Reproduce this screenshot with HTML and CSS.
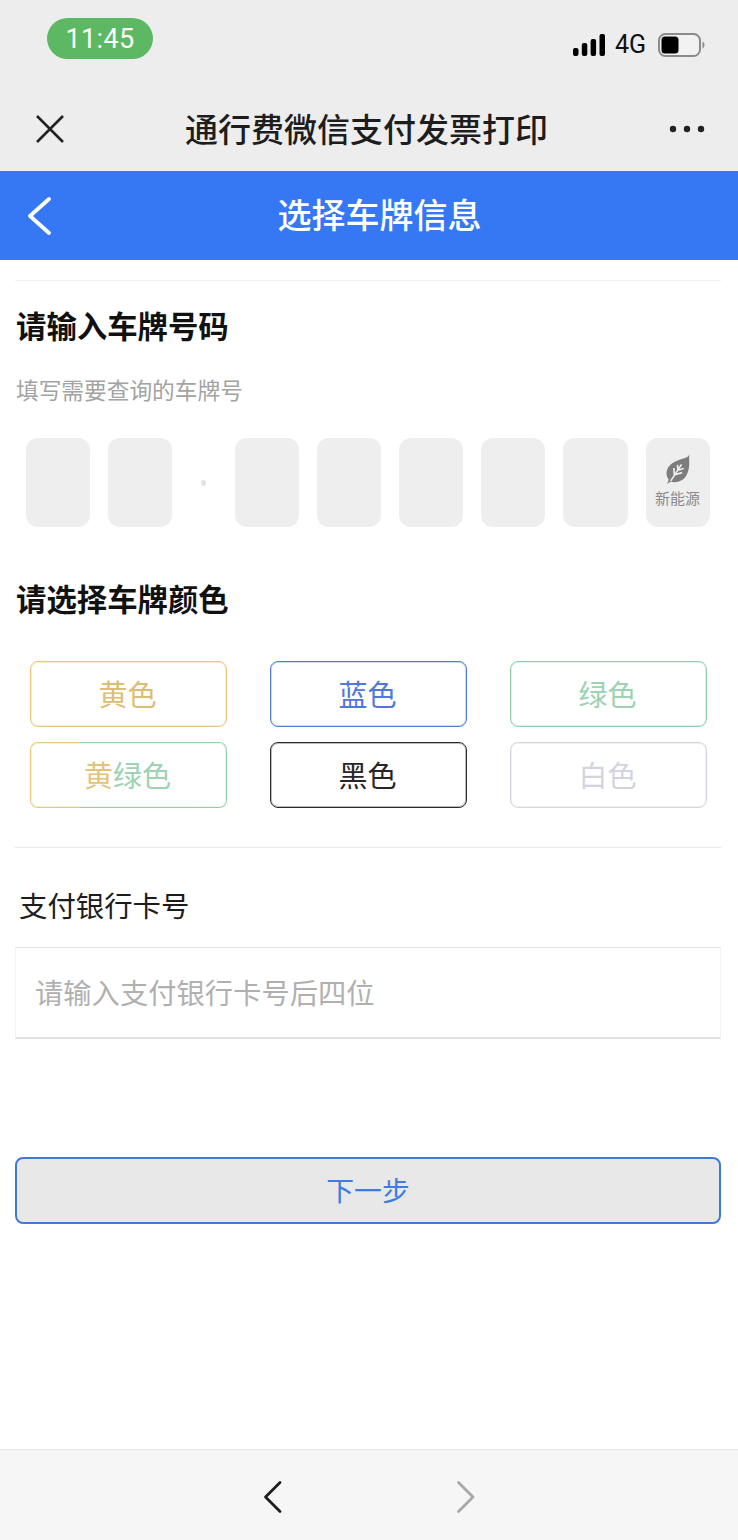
FILE: index.html
```html
<!DOCTYPE html>
<html lang="zh">
<head>
<meta charset="utf-8">
<title>选择车牌信息</title>
<link rel="stylesheet" href="styles.css">
</head>
<body>
<div class="page">
  <header class="chrome">
    <div class="status">
      <span class="time">11:45</span>
      <div class="status-right">
        <svg class="signal" width="32" height="22" viewBox="0 0 32 22"><rect x="0" y="14" width="5.500" height="8" rx="2"/><rect x="8.800" y="9" width="5.500" height="13" rx="2"/><rect x="17.600" y="5" width="5.500" height="17" rx="2"/><rect x="26.500" y="0" width="5.500" height="22" rx="2"/></svg>
        <span class="net">4G</span>
        <svg class="battery" width="47" height="24" viewBox="0 0 47 24"><rect x="1" y="1" width="41" height="22" rx="6.500" fill="#f2f2f2" stroke="#8a8a8a" stroke-width="2"/><rect x="3.500" y="3.500" width="17" height="17" rx="3.500" fill="#000"/><path d="M44.500 8.500c1.400.6 2 2 2 3.500s-.6 2.900-2 3.500z" fill="#8e8e8e"/></svg>
      </div>
    </div>
    <div class="wxbar">
      <svg class="close" width="30" height="30" viewBox="0 0 30 30"><path d="M2 2 28 28M28 2 2 28" stroke="#222" stroke-width="2.600" fill="none"/></svg>
      <h1 class="wxtitle">通行费微信支付发票打印</h1>
      <svg class="more" width="36" height="8" viewBox="0 0 36 8"><circle cx="4" cy="4" r="3.200"/><circle cx="18" cy="4" r="3.200"/><circle cx="32" cy="4" r="3.200"/></svg>
    </div>
  </header>

  <div class="appbar">
    <svg class="back" width="26" height="40" viewBox="0 0 26 40"><path d="M23 3 4 20l19 17" fill="none" stroke="#fff" stroke-width="3.800" stroke-linecap="round" stroke-linejoin="round"/></svg>
    <h2 class="apptitle">选择车牌信息</h2>
  </div>

  <main class="content">
    <section class="plate">
      <h3 class="heading">请输入车牌号码</h3>
      <p class="hint">填写需要查询的车牌号</p>
      <div class="cells">
        <div class="cell"></div>
        <div class="cell"></div>
        <div class="dot-slot"><span class="dot"></span></div>
        <div class="cell"></div>
        <div class="cell"></div>
        <div class="cell"></div>
        <div class="cell"></div>
        <div class="cell"></div>
        <div class="cell cell-ev">
          <svg class="leaf" width="26" height="30" viewBox="0 0 24 29"><path d="M23 0c-.6 2.300-2 3.200-5 4C9 6.500 2 10 1 17.500c-.4 3 .6 5.500 2 7.500L1.500 29l3.300-2.300C8 28 13 27.500 17 24.500c5-4 6.300-12 5.800-18.500-.2-2.200 0-4 .2-6z" fill="#7d7d7d"/><path d="M5 26 15.500 10M8.500 20.500 8 13.500M12 15.500l-.5-5M9 20l7-2M12.500 15.500l5-1.500" fill="none" stroke="#efefef" stroke-width="1.600"/></svg>
          <span class="ev-text">新能源</span>
        </div>
      </div>
      <h3 class="heading heading-color">请选择车牌颜色</h3>
      <div class="colors">
        <button class="color c-yellow">黄色</button>
        <button class="color c-blue">蓝色</button>
        <button class="color c-green">绿色</button>
        <button class="color c-yg"><span class="t-yellow">黄</span>绿色</button>
        <button class="color c-black">黑色</button>
        <button class="color c-white">白色</button>
      </div>
    </section>

    <section class="card">
      <label class="card-label">支付银行卡号</label>
      <div class="field">请输入支付银行卡号后四位</div>
    </section>

    <button class="next">下一步</button>
  </main>

  <footer class="toolbar">
    <svg width="20" height="34" viewBox="0 0 20 34"><path d="M17 2.500 2.500 17 17 31.500" fill="none" stroke="#1e1e1e" stroke-width="2.800" stroke-linecap="round" stroke-linejoin="round"/></svg>
    <svg width="20" height="34" viewBox="0 0 20 34"><path d="M2.500 2.500 17 17 2.500 31.500" fill="none" stroke="#a8a8a8" stroke-width="2.800" stroke-linecap="round" stroke-linejoin="round"/></svg>
  </footer>
</div>
</body>
</html>
```
FILE: styles.css
```css
* { box-sizing: border-box; }
html, body { margin: 0; padding: 0; background: #fff; }
body { font-family: "Noto Sans CJK SC", "Noto Sans", sans-serif; }
h1, h2, h3, p { margin: 0; font-weight: 400; }
.page { width: 738px; height: 1540px; display: flex; flex-direction: column; overflow: hidden; }

.chrome { height: 171px; background: #ededed; display: flex; flex-direction: column; }
.status { height: 90px; display: flex; justify-content: space-between; padding: 18px 33px 0 47px; }
.time { width: 106px; height: 41px; border-radius: 21px; background: #5cb863; color: #fff; font: 27px/42px Roboto, sans-serif; letter-spacing: .4px; text-align: center; }
.status-right { display: flex; align-items: center; height: 24px; margin-top: 15px; }
.signal { fill: #000; margin-right: 10px; }
.net { font: 400 25px/24px Roboto, sans-serif; color: #111; width: 33px; margin-right: 10px; }
.wxbar { flex: 1; display: flex; align-items: center; justify-content: space-between; padding: 0 33px 4px 35px; }
.wxtitle { font-size: 33px; line-height: 44px; color: #1d1d1d; font-weight: 500; white-space: nowrap; margin-bottom: 2px; margin-right: 1px; }
.more { fill: #222; }

.appbar { height: 89px; background: #3678f4; display: flex; align-items: center; padding-left: 26px; flex: none; }
.apptitle { flex: 1; text-align: center; color: #fff; font-size: 34px; font-weight: 500; line-height: 46px; padding-right: 31px; padding-bottom: 4px; }

.content { flex: 1; padding: 20px 17px 0 15px; display: flex; flex-direction: column; }
.plate { border-top: 1px solid #f1f1f1; }
.heading { font-size: 30.400px; font-weight: 700; line-height: 40px; color: #111; margin-top: 24px; padding-left: 1px; white-space: nowrap; }
.hint { font-size: 22.700px; line-height: 30px; color: #a3a3a3; margin-top: 30px; padding-left: 1px; white-space: nowrap; }
.cells { display: flex; gap: 18px; margin: 33px 11px 0; height: 89px; }
.cell { flex: 0 0 64.080px; background: #eeeeee; border-radius: 12px; }
.dot-slot { flex: 0 0 27px; display: flex; align-items: center; justify-content: center; }
.dot { width: 5px; height: 6px; border-radius: 50%; background: #e3e3e3; }
.cell-ev { display: flex; flex-direction: column; align-items: center; padding-top: 16px; }
.leaf { display: block; }
.ev-text { font-size: 15px; line-height: 20px; color: #8a8a8a; margin-top: 4px; white-space: nowrap; }
.heading-color { margin-top: 51px; }
.colors { display: grid; grid-template-columns: repeat(3, 197px); grid-auto-rows: 66px; justify-content: space-between; row-gap: 15px; margin: 43px 14px 0 15px; }
.color { padding: 0 2px 2px 0; background: #fff; border: 1px solid; border-radius: 8px; font-family: inherit; font-size: 29px; box-shadow: inset 0 0 0 1px var(--soft); }
.c-yellow { border-color: #e8c77c; color: #dcbd74; --soft: #f8eed6; }
.c-blue { border-color: #5079d9; color: #4f78d8; --soft: #cfdaf4; }
.c-green { border-color: #91cfac; color: #9dd2b3; --soft: #e0f2e8; }
.c-yg { border-color: transparent; color: #9dd2b3; background: linear-gradient(#fff, #fff) padding-box, linear-gradient(90deg, #e8c77c 50px, #91cfac 50px) border-box; --soft: #eef3e2; }
.t-yellow { color: #e3c377; }
.c-black { border-color: #2a2a2a; color: #262626; --soft: #bdbdbd; }
.c-white { border-color: #d3d5e0; color: #d2d4e0; --soft: #f1f2f6; }

.card { margin-top: 39px; border-top: 1.500px solid #e9e9e9; }
.card-label { display: block; font-size: 28.400px; line-height: 40px; color: #1c1c1c; padding-left: 4px; margin-top: 37px; }
.field { height: 92px; margin-top: 22px; border: 1px solid #f3f3f3; border-top-color: #e4e4e4; border-bottom: 2px solid #e2e2e2; padding-left: 19px; font-size: 28.300px; line-height: 88px; color: #b0b0b0; white-space: nowrap; }

.next { margin-top: 118px; height: 67px; background: #e8e8e8; border: 2px solid #3f7ad6; border-radius: 8px; color: #3f7cdf; font-family: inherit; font-size: 27.800px; padding: 0 0 4px; }

.toolbar { flex: none; height: 91px; background: #f6f6f6; border-top: 1px solid #e6e6e6; display: flex; justify-content: center; align-items: center; gap: 173px; padding-top: 3px; }
```
